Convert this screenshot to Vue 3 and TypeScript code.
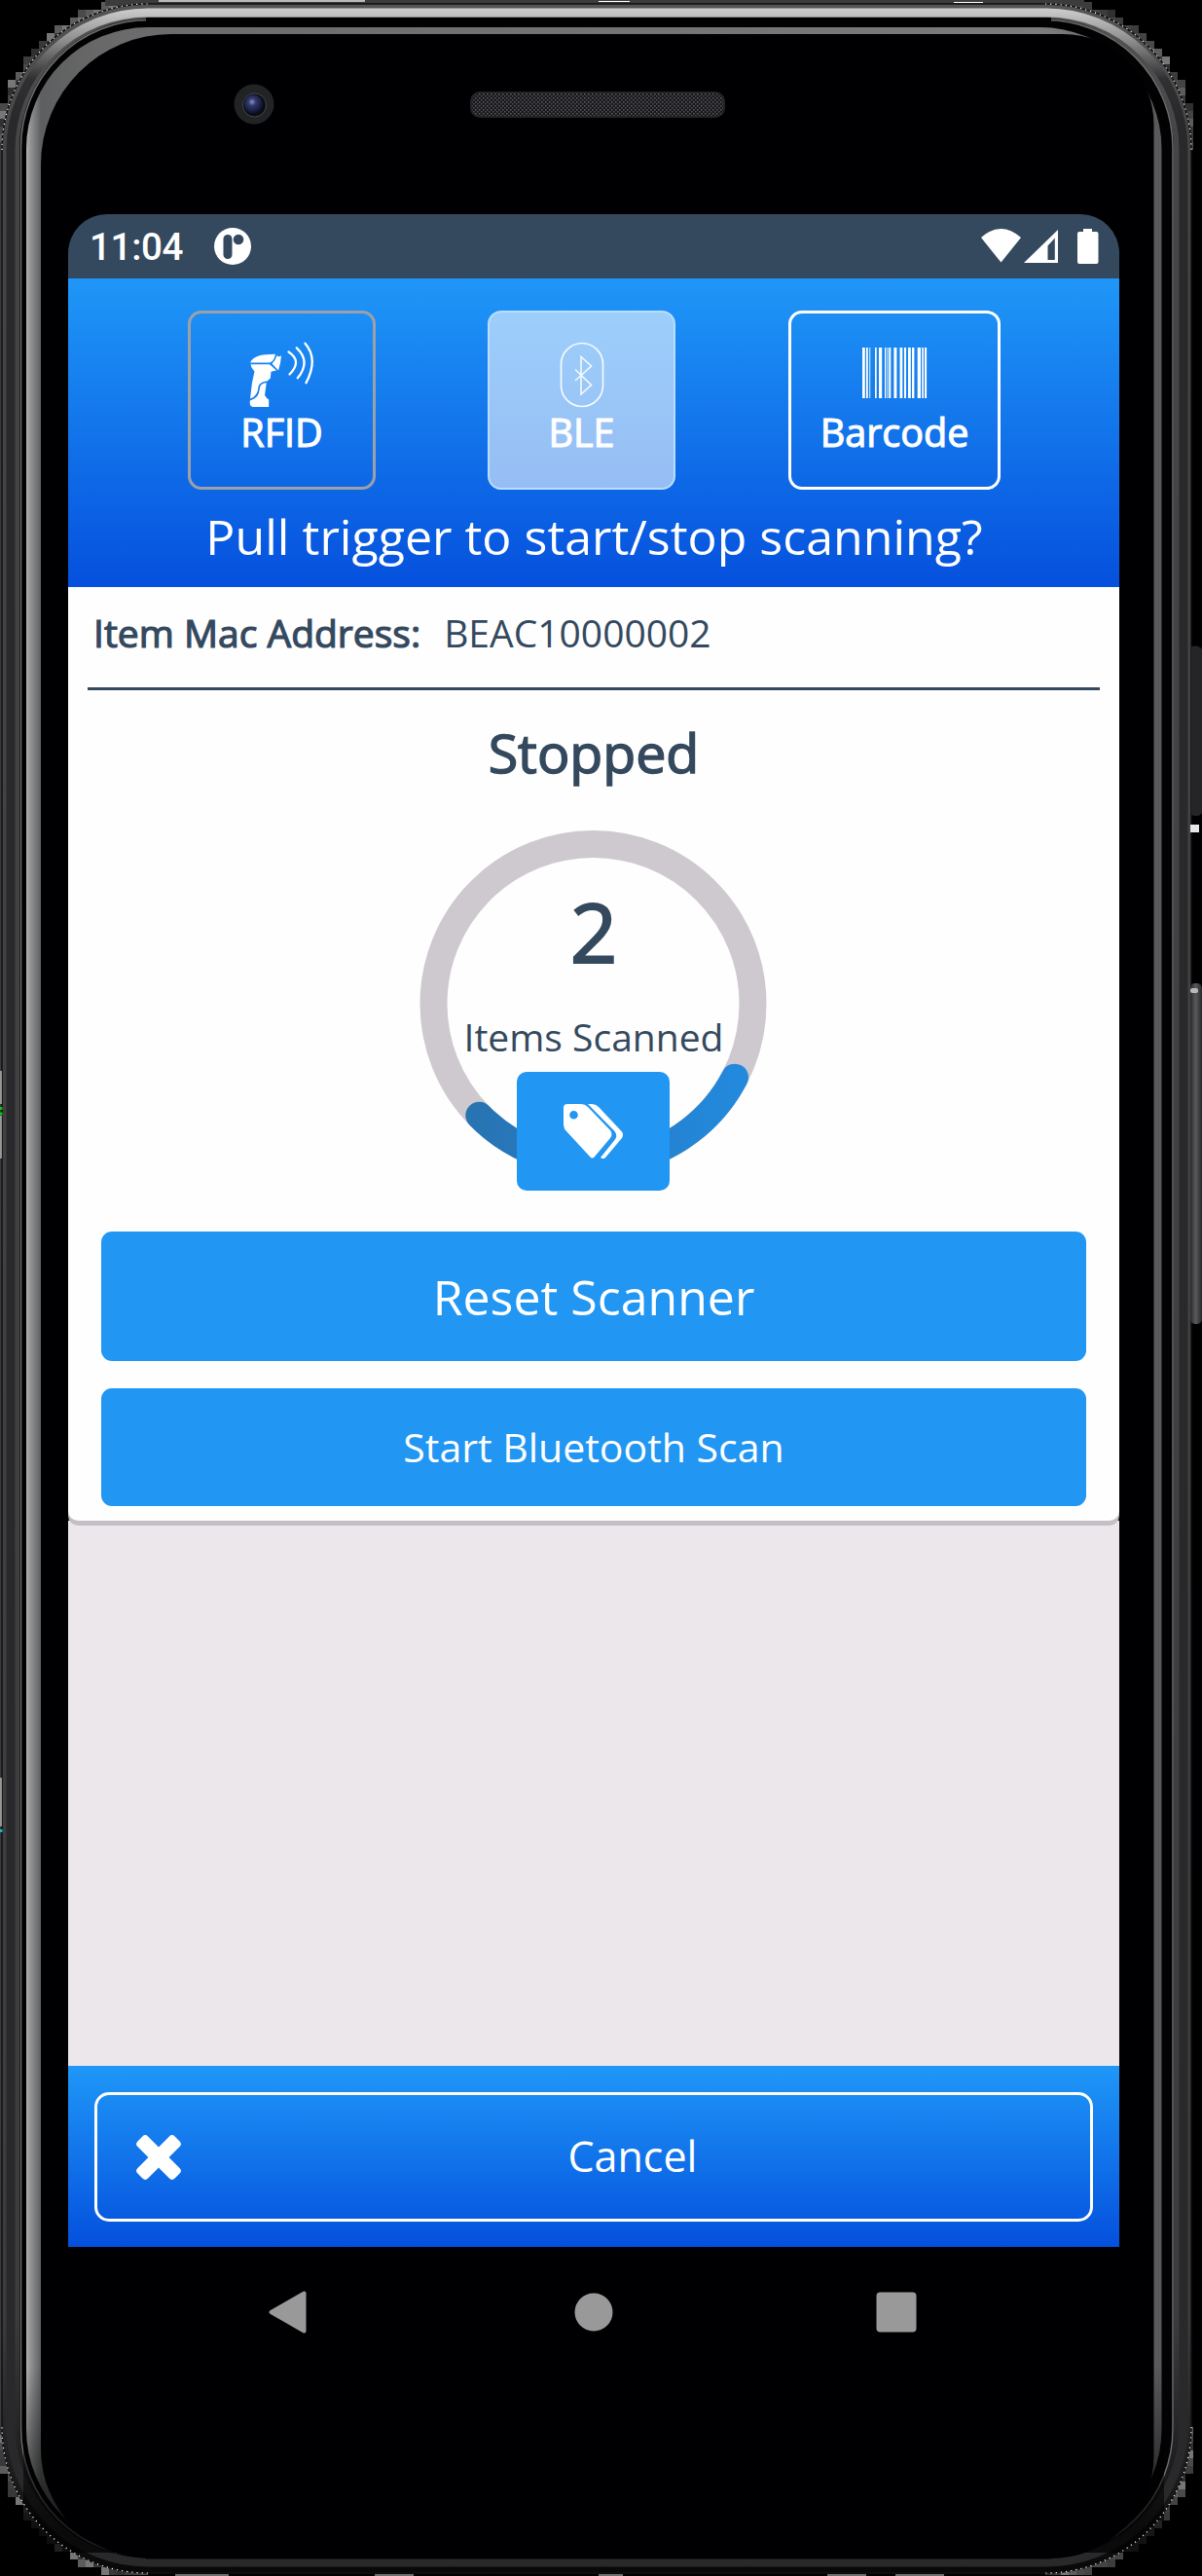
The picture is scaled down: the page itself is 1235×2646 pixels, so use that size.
<script setup lang="ts">
interface Block { x: number; y: number; c: string }
interface Bar { x: number; w: number }

// Rounded outline with separate corner radii: tl, tr, br, bl
function outline(x0: number, y0: number, x1: number, y1: number, r: number[]): string {
  const [a, b, c, d] = r
  return `M${x0 + a} ${y0}H${x1 - b}A${b} ${b} 0 0 1 ${x1} ${y0 + b}V${y1 - c}A${c} ${c} 0 0 1 ${x1 - c} ${y1}H${x0 + d}A${d} ${d} 0 0 1 ${x0} ${y1 - d}V${y0 + a}A${a} ${a} 0 0 1 ${x0 + a} ${y0}Z`
}

const body = outline(2, 4, 1224, 2643, [150, 150, 150, 150])
const rail = outline(11, 13, 1216, 2632, [141, 141, 141, 141])
const cavity = outline(20, 19, 1206, 2627, [134, 134, 134, 134])
const seam = outline(21.5, 20.5, 1205, 2626, [131, 131, 131, 131])
const bevel = outline(27, 28, 1193.5, 2620, [125, 125, 125, 125])
const glass = outline(42, 35, 1185.5, 2628, [134, 93, 106, 112])

// Stepped shadow around the four rounded corners
const shades = ['#4a4a4a', '#303030', '#5c5c5c', '#3c3c3c', '#777777', '#444444', '#383838']
const blocks: Block[] = []
const corners: number[][] = [[152, 154, -1, -1], [1074, 154, 1, -1], [152, 2493, -1, 1], [1074, 2493, 1, 1]]
corners.forEach(([cx, cy, sx, sy], k) => {
  for (let i = 0; i < 20; i++) {
    for (let j = 0; j < 20; j++) {
      const d = Math.hypot(i * 8 + 4, j * 8 + 4)
      if (d > 146 && d < 156) {
        blocks.push({
          x: cx + sx * i * 8 - (sx < 0 ? 8 : 0),
          y: cy + sy * j * 8 - (sy < 0 ? 8 : 0),
          c: shades[(i * 5 + j * 3 + k) % shades.length],
        })
      }
    }
  }
})

const bars: Bar[] = [
  [0, 2.8], [4, 1.8], [7.3, 0.9], [13, 1.7], [17, 3.2], [23, 1.3], [25.5, 0.9], [27.3, 2],
  [32.4, 3], [38.5, 2.8], [43, 2], [47, 2.8], [51, 2.4], [56.7, 3.3], [61.2, 1.7], [64, 2.1],
].map(([x, w]) => ({ x, w }))
</script>

<template>
  <div class="phone">
    <svg class="chassis" width="1235" height="2646" viewBox="0 0 1235 2646">
      <defs>
        <linearGradient id="gBody" x1="0" y1="0" x2="0" y2="1">
          <stop offset="0" stop-color="#555" /><stop offset=".05" stop-color="#454547" />
          <stop offset=".9" stop-color="#3c3b3e" /><stop offset="1" stop-color="#080808" />
        </linearGradient>
        <linearGradient id="gRail" gradientUnits="userSpaceOnUse" x1="0" y1="8" x2="0" y2="120">
          <stop offset="0" stop-color="#cfcfcf" /><stop offset=".3" stop-color="#8d8d8d" />
          <stop offset=".65" stop-color="#303032" /><stop offset="1" stop-color="#29292b" />
        </linearGradient>
        <linearGradient id="gBevel" gradientUnits="userSpaceOnUse" x1="27" y1="0" x2="1194" y2="0">
          <stop offset="0" stop-color="#b0b0b0" /><stop offset=".004" stop-color="#909292" />
          <stop offset=".013" stop-color="#5e5f60" /><stop offset=".08" stop-color="#6b6b6b" />
          <stop offset=".9" stop-color="#7b7b7b" /><stop offset="1" stop-color="#58585b" />
        </linearGradient>
        <linearGradient id="gFoot" gradientUnits="userSpaceOnUse" x1="0" y1="2430" x2="0" y2="2600">
          <stop offset="0" stop-color="#000" stop-opacity="0" /><stop offset="1" stop-color="#000" stop-opacity=".75" />
        </linearGradient>
        <linearGradient id="gKey" x1="0" y1="0" x2="1" y2="0">
          <stop offset="0" stop-color="#29292b" /><stop offset=".45" stop-color="#59595c" />
          <stop offset="1" stop-color="#29292b" />
        </linearGradient>
        <radialGradient id="gLens" cx=".42" cy=".38" r=".6">
          <stop offset="0" stop-color="#8a90c0" /><stop offset=".35" stop-color="#30386c" />
          <stop offset="1" stop-color="#10142e" />
        </radialGradient>
        <pattern id="mesh" width="4" height="4" patternUnits="userSpaceOnUse">
          <rect width="4" height="4" fill="#17171a" />
          <rect width="1.6" height="1.6" fill="#5b5a60" /><rect x="2" y="2" width="1.6" height="1.6" fill="#504f55" />
        </pattern>
      </defs>
      <rect v-for="(b, n) in blocks" :key="n" :x="b.x" :y="b.y" width="8" height="8" :fill="b.c" />
      <rect x="108" y="0" width="1006" height="6" fill="#3c3c3c" />
      <rect x="163" y="0" width="212" height="2" fill="#b9bdb9" />
      <rect x="615" y="1" width="32" height="1" fill="#fff" />
      <rect x="980" y="2" width="30" height="1" fill="#fff" />
      <rect x="0" y="150" width="4" height="2344" fill="#3b3b3b" />
      <path :d="body" fill="url(#gBody)" />
      <path :d="body" fill="none" stroke="#111" stroke-width="1.5" />
      <path :d="rail" fill="none" stroke="url(#gRail)" stroke-width="9" />
      <path :d="cavity" fill="#020202" />
      <path :d="seam" fill="none" stroke="#6d6d70" stroke-width="1.5" />
      <path d="M150 20.5H1080M150 2626H1080" stroke="#020202" stroke-width="5" />
      <path :d="bevel" fill="url(#gBevel)" />
      <rect x="24" y="2430" width="1172" height="192" fill="url(#gFoot)" />
      <path :d="glass" fill="#000002" />
      <path d="M2 154A150 150 0 0 1 152 4M1074 4A150 150 0 0 1 1224 154M1224 2493A150 150 0 0 1 1074 2643M152 2643A150 150 0 0 1 2 2493"
        fill="none" stroke="#fff" stroke-width="1.2" stroke-dasharray="1.2 4" />
      <path d="M1224 664q8-2 11 3v168q-3 5-11 2z" fill="#252527" />
      <rect x="1223" y="847" width="9" height="8" fill="#e6e6ea" />
      <rect x="1223" y="1010" width="12" height="350" rx="5" fill="url(#gKey)" />
      <rect x="1223" y="1015" width="8" height="5" rx="2" fill="#b8b8b8" />
      <path d="M1 1100v34M1 1146v44M1 1826v50" stroke="#d9d9d4" stroke-width="1.2" />
      <path d="M0 1137h2.5v3H0zM0 1142.500h2.500v3H0z" fill="#0c0" />
      <path d="M0 1879h2.500v3H0z" fill="#1bb" />
      <path d="M180 2645h55M385 2645h40M615 2645h25M850 2645h40M920 2645h50" stroke="#ddd" stroke-width="1" />
      <circle cx="261" cy="107" r="20.500" fill="#222325" />
      <circle cx="261.500" cy="108" r="12" fill="#0b0d14" stroke="#44484c" stroke-width="1" />
      <circle cx="260.500" cy="107" r="9.500" fill="url(#gLens)" />
      <rect x="484" y="95" width="260" height="25" rx="9" fill="url(#mesh)" stroke="#242427" stroke-width="2" />
    </svg>

    <main class="screen">
      <div class="status">
        <span class="clock">11:04</span>
        <svg class="app-dot" width="38" height="38" viewBox="0 0 38 38">
          <circle cx="19" cy="19" r="19" fill="#fff" />
          <rect x="9.500" y="7" width="9" height="25" rx="4.500" fill="#34495e" />
          <circle cx="25" cy="12" r="5.300" fill="#34495e" />
        </svg>
        <svg class="signals" width="121" height="38" viewBox="0 0 121 38" fill="#fff">
          <path d="M0 10Q20.500-8 41 10L20.500 35.500z" />
          <path fill-rule="evenodd" d="M79 2v34H44zM75.800 10.500L68.500 18.500V33h7.300z" />
          <path d="M105 1h9v3h4.500q2 0 2 2v29q0 2-2 2h-17.500q-2 0-2-2V6q0-2 2-2h4z" />
        </svg>
      </div>

      <header class="top">
        <div class="modes">
          <button class="mode rfid">
            <svg width="70" height="66" viewBox="0 0 70 66">
              <g fill="#fff">
                <path d="M2 17.500C5 11 12 8.800 28 8.700C27 13 25.500 16.500 22 17.500z" />
                <path d="M29.500 10.300Q31 12 34 10.200Q33.500 18 31 25.500L24.500 18.500Q28 15.500 29.500 10.300z" />
                <path d="M2.500 19.200H22L29 25.500 23.500 26.800 22.800 33.500 19.500 36.500Q12 37 10.500 42Q10 52 2 54.500L4 38 6.500 26.500Q3 23 2.500 19.200z" />
                <path d="M12.500 41.500Q14 38.500 18.800 38.300L17 51Q19 54.500 21.200 55.500V63H4.500Q1 62 1.800 56.500Q9.500 54 10.800 49z" />
              </g>
              <g fill="none" stroke="#fff" stroke-width="2.300" stroke-linecap="round">
                <path d="M41.500 6.500q14.500 9.500 1 23M49.800 2.300q15 14 1 31M58.500 -2.300q14 16 1 40.500" />
              </g>
            </svg>
            <span>RFID</span>
          </button>
          <button class="mode ble">
            <svg width="46" height="68" viewBox="0 0 46 68" fill="none" stroke="#f4faff">
              <rect x="1.500" y="1.500" width="43" height="65" rx="21.500" stroke-width="1.700" />
              <path d="M16 28.500L32.500 44.500 22 54V15.500L32.500 25 16 40" stroke-width="1.600" />
            </svg>
            <span>BLE</span>
          </button>
          <button class="mode barcode">
            <svg width="66" height="66" viewBox="0 0 66 66" fill="#fff">
              <rect v-for="b in bars" :key="b.x" :x="b.x" y="2" :width="b.w" height="52" />
            </svg>
            <span>Barcode</span>
          </button>
        </div>
        <div class="hint">Pull trigger to start/stop scanning?</div>
      </header>

      <section class="card">
        <div class="item"><b>Item Mac Address:</b><span>BEAC10000002</span></div>
        <div class="rule"></div>
        <div class="state">Stopped</div>
        <div class="gauge">
          <svg width="358" height="358" viewBox="0 0 358 358" fill="none" stroke-width="28">
            <defs>
              <linearGradient id="gArc" x1="0" x2="1"><stop offset="0" stop-color="#2874b3" /><stop offset="1" stop-color="#2389dc" /></linearGradient>
            </defs>
            <circle cx="178.500" cy="179" r="164" stroke="#cec9ce" />
            <path d="M324 254.700A164 164 0 0 1 61.300 293.700" stroke="url(#gArc)" stroke-linecap="round" />
          </svg>
          <div class="count">2</div>
          <div class="caption">Items Scanned</div>
          <button class="tags">
            <svg width="62" height="58" viewBox="0 0 62 58" fill="#fff">
              <path fill-rule="evenodd" d="M4 1H18Q22 1 25 4L48 28Q51 32 48 36L32 55Q29.500 58 27 55L3 29Q0 26 0 21V5Q0 1 4 1zM10.500 8a4.300 4.300 0 1 0 0 8.600a4.300 4.300 0 0 0 0-8.600z" />
              <path d="M25 1h4q4 0 7 3l24 25.500q2 3 0 6.500L43.500 55.500Q41 58.500 38 56L52.500 38q3.500-4.500 0-9z" />
            </svg>
          </button>
        </div>
        <button class="action reset">Reset Scanner</button>
        <button class="action start">Start Bluetooth Scan</button>
      </section>

      <footer class="bottom">
        <button class="cancel">
          <svg width="44" height="44" viewBox="0 0 44 44" fill="#fff">
            <rect x="-5" y="14.500" width="54" height="15" rx="4" transform="rotate(45 22 22)" />
            <rect x="-5" y="14.500" width="54" height="15" rx="4" transform="rotate(-45 22 22)" />
          </svg>
          <span>Cancel</span>
        </button>
      </footer>
      <nav class="keys">
        <svg width="40" height="44" viewBox="0 0 40 44"><path d="M36.500 2.500v39L2.500 22z" fill="#999" stroke="#999" stroke-width="4" stroke-linejoin="round" /></svg>
        <svg width="40" height="40" viewBox="0 0 40 40"><circle cx="22" cy="20" r="19.500" fill="#999" /></svg>
        <svg width="42" height="42" viewBox="0 0 42 42"><rect x=".5" y=".5" width="41" height="41" rx="4" fill="#999" /></svg>
      </nav>
    </main>
  </div>
</template>

<style>
html, body { margin: 0; background: #000; }
</style>

<style scoped>
* { box-sizing: border-box; }
.phone { position: relative; width: 1235px; height: 2646px; overflow: hidden; background: #000; padding: 220px 85px 0 70px; font-family: "Open Sans", sans-serif; }
.chassis { position: absolute; left: 0; top: 0; }
svg { display: block; flex: none; overflow: visible; }
button { margin: 0; padding: 0; background: none; border: 0; font-family: inherit; color: #fff; }
.screen { position: relative; width: 1080px; display: flex; flex-direction: column; }
.status { height: 66px; background: #34495e; border-radius: 40px 40px 0 0; display: flex; align-items: center; padding: 0 21px 0 22px; }
.clock { width: 128px; font: 500 38.500px/66px Roboto, sans-serif; letter-spacing: -.3px; color: #fff; white-space: nowrap; padding-top: 2px; }
.signals { margin-left: auto; }
.top { height: 317px; padding: 33px 0 0 123px; background: linear-gradient(#1f97f8, #0550dd); }
.modes { display: flex; gap: 115px; height: 184px; }
.mode { width: 193px; height: 184px; border: 3px solid #fff; border-radius: 14px; padding-top: 33px; display: flex; flex-direction: column; align-items: center; }
.mode span { font-size: 39.500px; line-height: 44px; -webkit-text-stroke: 1.1px currentColor; margin-top: auto; margin-bottom: 34px; white-space: nowrap; }
.rfid { border-color: #9ca1a9; }
.ble { border: 2px solid #b9dcff; background: rgba(255, 255, 255, .57); padding-top: 30px; }
.ble span { margin-bottom: 35px; }
.barcode { width: 218px; margin-left: 1px; }
.hint { width: 835px; text-align: center; font-size: 50.100px; line-height: 96px; color: #fff; white-space: nowrap; }
.card { height: 959px; background: #fefefe; border-radius: 0 0 10px 10px; box-shadow: 0 5px 0 #c3bfc4; display: flex; flex-direction: column; align-items: center; color: #34495e; position: relative; z-index: 1; }
.item { align-self: stretch; height: 94px; padding-left: 26px; margin-bottom: 9px; font-size: 39px; line-height: 94px; display: flex; gap: 24px; white-space: nowrap; }
.item b, .state, .count { font-weight: 400; -webkit-text-stroke: 1.200px currentColor; }
.rule { width: 1040px; height: 3px; background: #34495e; flex: none; }
.state { font-size: 55.500px; line-height: 128px; height: 143px; -webkit-text-stroke-width: 1.500px; }
.gauge { position: relative; width: 358px; height: 413px; flex: none; }
.count, .caption { position: absolute; left: 0; right: 0; text-align: center; white-space: nowrap; }
.count { top: 44px; font-size: 85px; line-height: 120px; -webkit-text-stroke-width: 2px; }
.caption { top: 183px; font-size: 39px; line-height: 60px; }
.tags { position: absolute; left: 100px; top: 249px; width: 157px; height: 122px; border-radius: 10px; background: #2196f3; display: flex; align-items: center; justify-content: center; }
.action { width: 1012px; background: #2196f3; border-radius: 11px; white-space: nowrap; }
.reset { height: 133px; font-size: 50px; line-height: 133px; margin-bottom: 28px; padding-top: 1px; }
.start { height: 121px; font-size: 41px; line-height: 121px; }
.bottom { height: 746px; padding: 587px 27px 26px; background: linear-gradient(#ebe7eb 560px, #1f97f8 560px, #0450dd 746px); }
.cancel { width: 1026px; height: 133px; border: 3px solid #fff; border-radius: 15px; display: flex; align-items: center; padding: 0 41px; }
.cancel span { flex: 1; text-align: center; font-size: 43px; line-height: 120px; padding-left: 36px; margin-top: -2px; }
.keys { height: 133px; display: flex; align-items: center; justify-content: space-between; padding: 0 208px 0 206px; }
</style>
